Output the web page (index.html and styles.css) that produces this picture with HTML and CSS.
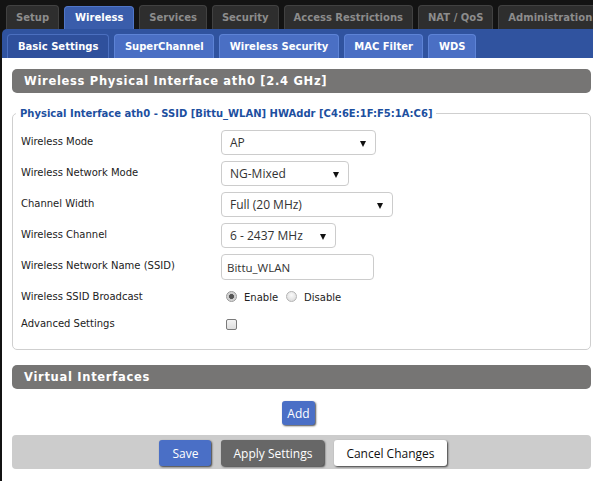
FILE: index.html
```html
<!DOCTYPE html>
<html>
<head>
<meta charset="utf-8">
<link rel="stylesheet" href="styles.css">
</head>
<body>
<div class="page">
  <nav class="maintabs">
    <span class="tab">Setup</span>
    <span class="tab active">Wireless</span>
    <span class="tab">Services</span>
    <span class="tab">Security</span>
    <span class="tab">Access Restrictions</span>
    <span class="tab">NAT / QoS</span>
    <span class="tab">Administration</span>
  </nav>
  <nav class="subbar">
    <span class="subtab active">Basic Settings</span>
    <span class="subtab">SuperChannel</span>
    <span class="subtab">Wireless Security</span>
    <span class="subtab">MAC Filter</span>
    <span class="subtab">WDS</span>
  </nav>
  <main class="content">
    <h2 class="sechead">Wireless Physical Interface ath0 [2.4 GHz]</h2>
    <fieldset class="box">
      <legend>Physical Interface ath0 - SSID [Bittu_WLAN] HWAddr [C4:6E:1F:F5:1A:C6]</legend>
      <div class="row">
        <span class="label">Wireless Mode</span>
        <span class="select w155">AP<i class="arrow"></i></span>
      </div>
      <div class="row">
        <span class="label">Wireless Network Mode</span>
        <span class="select w128">NG-Mixed<i class="arrow"></i></span>
      </div>
      <div class="row">
        <span class="label">Channel Width</span>
        <span class="select w172">Full (20 MHz)<i class="arrow"></i></span>
      </div>
      <div class="row">
        <span class="label">Wireless Channel</span>
        <span class="select w115">6 - 2437 MHz<i class="arrow"></i></span>
      </div>
      <div class="row">
        <span class="label">Wireless Network Name (SSID)</span>
        <span class="textinput">Bittu_WLAN</span>
      </div>
      <div class="row">
        <span class="label">Wireless SSID Broadcast</span>
        <span class="radios">
          <span class="radio checked"></span><span class="rlabel">Enable</span>
          <span class="radio"></span><span class="rlabel">Disable</span>
        </span>
      </div>
      <div class="row short">
        <span class="label">Advanced Settings</span>
        <span class="checkbox"></span>
      </div>
    </fieldset>
    <h2 class="sechead second">Virtual Interfaces</h2>
    <div class="addwrap"><span class="btn blue add">Add</span></div>
    <div class="actions">
      <span class="btn blue">Save</span>
      <span class="btn gray">Apply Settings</span>
      <span class="btn white">Cancel Changes</span>
    </div>
  </main>
</div>
</body>
</html>
```

FILE: styles.css
```css
html, body {
  margin: 0;
  padding: 0;
  background: #131313;
  overflow: hidden;
}

.page {
  margin-left: 2px;
  width: 591px;
}

.maintabs {
  display: flex;
  gap: 5px;
  height: 29px;
  padding: 5px 0 0 4px;
  box-sizing: border-box;
  overflow: hidden;
  white-space: nowrap;
}

.tab {
  flex: none;
  height: 24px;
  padding: 0 9px;
  background: #2e2e2e;
  border: 1px solid #414141;
  border-bottom: none;
  border-radius: 4px 4px 0 0;
  color: #8c8c8c;
  font: bold 10px "DejaVu Sans", sans-serif;
  line-height: 24px;
  box-sizing: border-box;
}

.tab.active {
  background: #3a5dab;
  border-color: #5076c8;
  color: #fff;
  margin-top: 1px;
  height: 23px;
  line-height: 22px;
  padding: 0 10px;
}

.subbar {
  display: flex;
  gap: 5px;
  height: 29px;
  padding: 5px 0 0 5px;
  box-sizing: border-box;
  background: #30539f;
  border-radius: 5px 0 0 0;
  white-space: nowrap;
}

.subtab {
  flex: none;
  height: 24px;
  padding: 0 9.5px;
  background: #4a6fc4;
  border: 1px solid #5d83d6;
  border-bottom: none;
  border-radius: 4px 4px 0 0;
  color: #fff;
  font: bold 10px "DejaVu Sans", sans-serif;
  line-height: 24px;
  box-sizing: border-box;
}

.subtab.active {
  background: #2f509c;
  border-color: #4b6fbf;
  padding: 0 10px;
}

.content {
  background: #fff;
  padding: 11px 2px 12px 10px;
  font: 10px "DejaVu Sans", sans-serif;
  color: #222;
}

.sechead {
  margin: 0;
  height: 24px;
  padding-left: 12px;
  background: #767574;
  border-radius: 5px;
  color: #fff;
  font: bold 11.5px "DejaVu Sans", sans-serif;
  line-height: 25px;
  letter-spacing: 0.7px;
}

.box {
  margin: 15px 0 0 0;
  padding: 11px 0 15px 0;
  border: 1px solid #cfcfcf;
  border-radius: 5px;
  min-inline-size: 0;
}

.box legend {
  margin-left: 3px;
  padding: 0 4px;
  color: #1d4f9f;
  font: bold 10px "DejaVu Sans", sans-serif;
}

.row {
  display: flex;
  align-items: center;
  height: 25px;
  margin-bottom: 6px;
  padding-left: 8px;
}

.row.short {
  height: 20px;
  margin-top: -2px;
  margin-bottom: 0;
}

.label {
  width: 200px;
  flex: none;
  margin-top: -2px;
}

.select, .textinput {
  position: relative;
  display: flex;
  align-items: center;
  height: 25px;
  box-sizing: border-box;
  border: 1px solid #cccccc;
  border-radius: 4px;
  background: #fff;
  color: #333;
  font: 12px "Open Sans", sans-serif;
  padding-left: 8px;
}

.w155 { width: 155px; }
.w128 { width: 128px; }
.w172 { width: 172px; }
.w115 { width: 115px; }

.select .arrow {
  position: absolute;
  right: 9px;
  top: 10px;
  width: 0;
  height: 0;
  border-left: 3px solid transparent;
  border-right: 3px solid transparent;
  border-top: 6px solid #111;
}

.textinput {
  width: 153px;
  height: 26px;
  padding-left: 5px;
  margin-top: 1px;
  font-size: 11.5px;
}

.radios {
  display: flex;
  align-items: center;
  padding-left: 5px;
}

.radio {
  width: 11px;
  height: 11px;
  border-radius: 50%;
  box-sizing: border-box;
  border: 1px solid #b4b4b4;
  background: radial-gradient(circle at 50% 35%, #fafafa, #d6d6d6);
  margin-top: -3px;
}

.radio.checked {
  border-color: #999;
  background: radial-gradient(circle, #555 0 2.2px, #c9c9c9 2.8px, #e6e6e6 100%);
}

.rlabel {
  margin: 0 8px 0 7px;
}

.checkbox {
  width: 11px;
  height: 11px;
  margin-left: 5px;
  box-sizing: border-box;
  border: 1px solid #7a7a7a;
  border-radius: 2px;
  background: linear-gradient(#f4f4f4, #dedede);
}

.sechead.second {
  margin-top: 15px;
}

.addwrap {
  display: flex;
  justify-content: center;
  margin-top: 12px;
}

.btn {
  display: flex;
  align-items: center;
  height: 26px;
  box-sizing: border-box;
  padding: 0 13px;
  border-radius: 3px;
  font: 12px "Open Sans", sans-serif;
  box-shadow: 1px 1px 2px rgba(0, 0, 0, 0.7);
}

.btn.add {
  margin-right: 6px;
  padding: 0 5px;
  height: 24px;
}

.blue {
  background: #4a6fc6;
  color: #fff;
}

.gray {
  background: #676767;
  color: #fff;
  padding: 0 12px;
}

.white {
  background: #fff;
  color: #111;
  padding: 0 12px;
}

.actions {
  display: flex;
  justify-content: center;
  gap: 10px;
  margin-top: 10px;
  height: 34px;
  padding-top: 5px;
  padding-left: 3px;
  box-sizing: border-box;
  background: #cccccc;
  border-radius: 4px;
}
```
